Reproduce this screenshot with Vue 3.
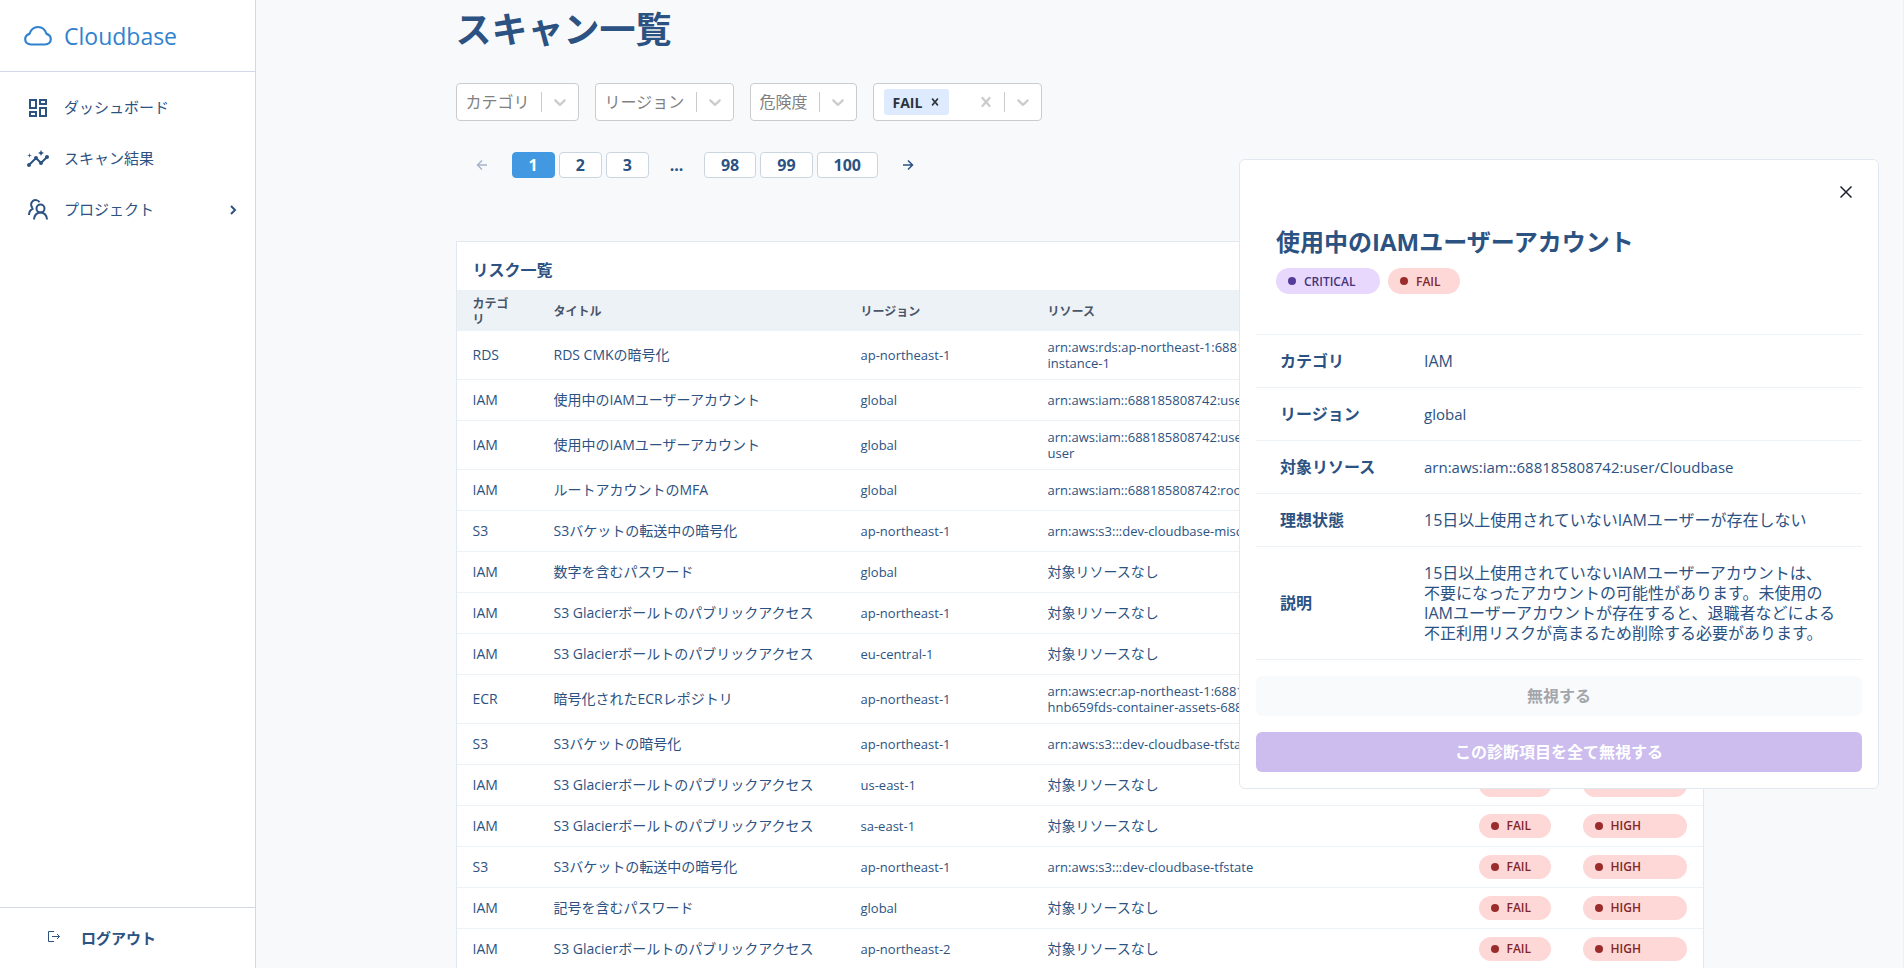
<script setup>
const filters = ['カテゴリ', 'リージョン', '危険度']

const rows = [
  ['RDS', 'RDS CMKの暗号化', 'ap-northeast-1', 'arn:aws:rds:ap-northeast-1:688185808742:db:\ninstance-1'],
  ['IAM', '使用中のIAMユーザーアカウント', 'global', 'arn:aws:iam::688185808742:user/Cloudbase'],
  ['IAM', '使用中のIAMユーザーアカウント', 'global', 'arn:aws:iam::688185808742:user/cloudbase-\nuser'],
  ['IAM', 'ルートアカウントのMFA', 'global', 'arn:aws:iam::688185808742:root'],
  ['S3', 'S3バケットの転送中の暗号化', 'ap-northeast-1', 'arn:aws:s3:::dev-cloudbase-misc'],
  ['IAM', '数字を含むパスワード', 'global', '対象リソースなし'],
  ['IAM', 'S3 Glacierボールトのパブリックアクセス', 'ap-northeast-1', '対象リソースなし'],
  ['IAM', 'S3 Glacierボールトのパブリックアクセス', 'eu-central-1', '対象リソースなし'],
  ['ECR', '暗号化されたECRレポジトリ', 'ap-northeast-1', 'arn:aws:ecr:ap-northeast-1:688185808742:cdk-\nhnb659fds-container-assets-688185808742'],
  ['S3', 'S3バケットの暗号化', 'ap-northeast-1', 'arn:aws:s3:::dev-cloudbase-tfstate'],
  ['IAM', 'S3 Glacierボールトのパブリックアクセス', 'us-east-1', '対象リソースなし'],
  ['IAM', 'S3 Glacierボールトのパブリックアクセス', 'sa-east-1', '対象リソースなし'],
  ['S3', 'S3バケットの転送中の暗号化', 'ap-northeast-1', 'arn:aws:s3:::dev-cloudbase-tfstate'],
  ['IAM', '記号を含むパスワード', 'global', '対象リソースなし'],
  ['IAM', 'S3 Glacierボールトのパブリックアクセス', 'ap-northeast-2', '対象リソースなし'],
]

const details = [
  ['カテゴリ', 'IAM'],
  ['リージョン', 'global'],
  ['対象リソース', 'arn:aws:iam::688185808742:user/Cloudbase'],
  ['理想状態', '15日以上使用されていないIAMユーザーが存在しない'],
  ['説明', '15日以上使用されていないIAMユーザーアカウントは、\n不要になったアカウントの可能性があります。未使用の\nIAMユーザーアカウントが存在すると、退職者などによる\n不正利用リスクが高まるため削除する必要があります。'],
]

// Long identifiers are set one step smaller than the Japanese text around them.
const isIdentifier = (text) => /^[\x00-\x7f]{4,}$/.test(text)
</script>

<template>
  <div class="app">
    <aside class="sidebar">
      <a class="brand" href="#">
        <svg class="brand-icon" viewBox="0 0 28 28" fill="none" stroke="currentColor" stroke-width="2.200" stroke-linejoin="round">
          <path d="M7 22.500 C3.500 22.500 1.200 20.300 1.200 17.300 C1.200 14.600 2.800 12.700 5.400 11.900 C6.800 7.800 9.800 5 14 5 C18.200 5 21.200 7.800 22.600 11.900 C25.200 12.700 26.800 14.600 26.800 17.300 C26.800 20.300 24.500 22.500 21 22.500 Z" />
        </svg>
        <span>Cloudbase</span>
      </a>
      <nav class="menu">
        <a class="item" href="#">
          <svg class="menu-icon" viewBox="0 0 24 24" fill="currentColor">
            <path d="M19 5v2h-4V5h4M9 5v6H5V5h4m10 8v6h-4v-6h4M9 17v2H5v-2h4M21 3h-8v6h8V3zM11 3H3v10h8V3zm10 8h-8v10h8V11zm-10 4H3v6h8v-6z" />
          </svg>
          <span>ダッシュボード</span>
        </a>
        <a class="item" href="#">
          <svg class="menu-icon" viewBox="0 0 24 24" fill="currentColor">
            <path d="M21 8c-1.450 0-2.260 1.440-1.930 2.510l-3.550 3.560c-.3-.09-.74-.09-1.040 0l-2.550-2.550C12.270 10.450 11.460 9 10 9c-1.450 0-2.270 1.440-1.930 2.520l-4.560 4.550C2.440 15.740 1 16.550 1 18c0 1.100.9 2 2 2 1.450 0 2.260-1.440 1.930-2.510l4.550-4.560c.3.090.74.090 1.040 0l2.550 2.550C12.730 16.550 13.540 18 15 18c1.450 0 2.270-1.440 1.930-2.520l3.560-3.550C21.560 12.260 23 11.450 23 10c0-1.100-.9-2-2-2z" />
            <path d="M15 9l.94-2.070L18 6l-2.060-.93L15 3l-.92 2.070L12 6l2.080.93zM3.500 11L4 9l2-.5L4 8l-.5-2L3 8l-2 .5L3 9z" />
          </svg>
          <span>スキャン結果</span>
        </a>
        <a class="item" href="#">
          <svg class="menu-icon" viewBox="0 0 24 24" fill="none" stroke="currentColor" stroke-width="2">
            <circle cx="14.500" cy="10.500" r="4" />
            <path d="M8 21.500c0-4 2.700-7 6.500-7s6.500 3 6.500 7" />
            <path d="M13.500 4.300A4.500 4.500 0 1 0 6.500 9.800M7.500 10.500c-2.900 1-4.500 3.300-4.500 6.500" />
          </svg>
          <span>プロジェクト</span>
          <svg class="chevron-right" viewBox="0 0 12 12" fill="none" stroke="currentColor" stroke-width="2"><path d="M4 2l4 4-4 4" /></svg>
        </a>
      </nav>
      <div class="logout-bar">
        <button class="logout" type="button">
          <svg viewBox="0 0 12 12" fill="none" stroke="currentColor" stroke-width="1"><path d="M6 .5H.5v10H6M4 5.500h7.500M9 3l2.500 2.500L9 8" /></svg>
          <span>ログアウト</span>
        </button>
      </div>
    </aside>

    <main class="main">
      <div class="container">
        <h1>スキャン一覧</h1>

        <div class="filters">
          <div v-for="name in filters" :key="name" class="filter">
            <select :aria-label="name"><option>{{ name }}</option></select>
            <span class="separator"></span>
            <svg class="indicator" viewBox="0 0 20 20" fill="currentColor"><path d="M4.516 7.548c.436-.446 1.043-.481 1.576 0L10 11.295l3.908-3.747c.533-.481 1.141-.446 1.574 0 .436.445.408 1.197 0 1.615-.406.418-4.695 4.502-4.695 4.502a1.095 1.095 0 0 1-1.576 0S4.924 9.581 4.516 9.163s-.436-1.170 0-1.615z" /></svg>
          </div>
          <div class="filter multi">
            <span class="tag">
              FAIL
              <button type="button" aria-label="FAILを外す"><svg viewBox="0 0 20 20" fill="currentColor"><path d="M14.348 14.849c-.469.469-1.229.469-1.697 0L10 11.819l-2.651 3.029c-.469.469-1.229.469-1.697 0-.469-.469-.469-1.229 0-1.697l2.758-3.150-2.759-3.152c-.469-.469-.469-1.228 0-1.697s1.228-.469 1.697 0L10 8.183l2.651-3.031c.469-.469 1.228-.469 1.697 0s.469 1.229 0 1.697l-2.758 3.152 2.758 3.150c.469.469.469 1.229 0 1.698z" /></svg></button>
            </span>
            <button class="indicator-button" type="button" aria-label="クリア"><svg viewBox="0 0 20 20" fill="currentColor"><path d="M14.348 14.849c-.469.469-1.229.469-1.697 0L10 11.819l-2.651 3.029c-.469.469-1.229.469-1.697 0-.469-.469-.469-1.229 0-1.697l2.758-3.150-2.759-3.152c-.469-.469-.469-1.228 0-1.697s1.228-.469 1.697 0L10 8.183l2.651-3.031c.469-.469 1.228-.469 1.697 0s.469 1.229 0 1.697l-2.758 3.152 2.758 3.150c.469.469.469 1.229 0 1.698z" /></svg></button>
            <span class="separator"></span>
            <button class="indicator-button" type="button" aria-label="ステータスを開く"><svg viewBox="0 0 20 20" fill="currentColor"><path d="M4.516 7.548c.436-.446 1.043-.481 1.576 0L10 11.295l3.908-3.747c.533-.481 1.141-.446 1.574 0 .436.445.408 1.197 0 1.615-.406.418-4.695 4.502-4.695 4.502a1.095 1.095 0 0 1-1.576 0S4.924 9.581 4.516 9.163s-.436-1.170 0-1.615z" /></svg></button>
          </div>
        </div>

        <nav class="pagination" aria-label="ページ">
          <button class="arrow" type="button" disabled aria-label="前へ"><svg viewBox="0 0 12 12" fill="none" stroke="currentColor" stroke-width="1.500"><path d="M11 6H1.500M6 1.500L1.500 6 6 10.500" /></svg></button>
          <button class="page current" type="button">1</button>
          <button class="page" type="button">2</button>
          <button class="page" type="button">3</button>
          <span class="ellipsis">...</span>
          <button class="page" type="button">98</button>
          <button class="page" type="button">99</button>
          <button class="page" type="button">100</button>
          <button class="arrow" type="button" aria-label="次へ"><svg viewBox="0 0 12 12" fill="none" stroke="currentColor" stroke-width="1.500"><path d="M1 6h9.500M6 1.500L10.500 6 6 10.500" /></svg></button>
        </nav>

        <section class="card">
          <h2>リスク一覧</h2>
          <table class="risks">
            <colgroup>
              <col class="col-category"><col class="col-title"><col class="col-region"><col><col class="col-status"><col class="col-severity">
            </colgroup>
            <thead>
              <tr><th>カテゴリ</th><th>タイトル</th><th>リージョン</th><th>リソース</th><th>ステータス</th><th>危険度</th></tr>
            </thead>
            <tbody>
              <tr v-for="(row, i) in rows" :key="i">
                <td v-for="(cell, j) in row" :key="j" :class="{ identifier: isIdentifier(cell), resource: j === 3 }">{{ cell }}</td>
                <td><span class="badge">FAIL</span></td>
                <td><span class="badge wide">HIGH</span></td>
              </tr>
            </tbody>
          </table>
        </section>
      </div>
    </main>

    <section class="panel" role="dialog" aria-labelledby="panel-title">
      <button class="close" type="button" aria-label="閉じる"><svg viewBox="0 0 12 12" fill="none" stroke="currentColor" stroke-width="1.500"><path d="M.5.500l11 11M11.500.500L.5 11.500" /></svg></button>
      <header>
        <h2 id="panel-title">使用中のIAMユーザーアカウント</h2>
        <div class="badges">
          <span class="badge wide critical">CRITICAL</span>
          <span class="badge">FAIL</span>
        </div>
      </header>
      <table class="details">
        <tbody>
          <tr v-for="[label, value] in details" :key="label">
            <th scope="row">{{ label }}</th>
            <td :class="{ identifier: isIdentifier(value) }">{{ value }}</td>
          </tr>
        </tbody>
      </table>
      <div class="actions">
        <button class="ignore" type="button" disabled>無視する</button>
        <button class="ignore-all" type="button" disabled>この診断項目を全て無視する</button>
      </div>
    </section>
  </div>
</template>

<style>
body {
  overflow: hidden;
  background: #f8f9fb;
}
</style>

<style scoped>
.app {
  display: flex;
  height: 100vh;
  overflow: hidden;
  color: #2c5282;
  font-family: "Open Sans", "Noto Sans CJK JP", sans-serif;
  font-size: 16px;
}
.app *,
.app *::before {
  box-sizing: border-box;
}
a {
  color: inherit;
  text-decoration: none;
}
button {
  padding: 0;
  border: 0;
  background: none;
  color: inherit;
  font: inherit;
}
svg {
  display: block;
  flex: none;
}
h1,
h2 {
  margin: 0;
}

.sidebar {
  display: flex;
  flex: none;
  flex-direction: column;
  width: 256px;
  border-right: 1px solid #d3d6e6;
  background: #fff;
}
.brand {
  display: flex;
  align-items: center;
  gap: 12px;
  height: 72px;
  padding: 0 24px;
  border-bottom: 1px solid #d3d6e6;
  color: #3182ce;
  font-size: 23px;
}
.brand-icon {
  width: 28px;
  height: 28px;
}
.menu {
  display: flex;
  flex: 1;
  flex-direction: column;
  padding-top: 10px;
}
.item {
  display: flex;
  align-items: center;
  gap: 14px;
  height: 51px;
  padding: 0 16px 0 26px;
  font-size: 15px;
}
.item span {
  padding-bottom: 2px;
}
.menu-icon {
  width: 24px;
  height: 24px;
}
.chevron-right {
  width: 12px;
  height: 12px;
  margin-left: auto;
}
.logout-bar {
  height: 61px;
  padding: 17px 48px;
  border-top: 1px solid #d3d6e6;
}
.logout {
  display: flex;
  align-items: center;
  gap: 21px;
  height: 24px;
  font-size: 15px;
  font-weight: 600;
}
.logout svg {
  width: 12px;
  height: 12px;
}

.main {
  flex: 1;
  min-width: 0;
  border-right: 1px solid #f0f1f3;
}
.container {
  max-width: 1248px;
  margin: 0 auto;
}
h1 {
  padding-top: 8px;
  font-size: 36px;
  line-height: 44px;
}

.filters {
  display: flex;
  gap: 16px;
  margin-top: 31px;
}
.filter {
  display: flex;
  align-items: center;
  height: 38px;
  border: 1px solid #ccc;
  border-radius: 4px;
  background: #fff;
  color: #ccc;
}
.filter select {
  margin: 0 10px 0 9px;
  padding: 0;
  border: 0;
  background: none;
  appearance: none;
  color: #808080;
  font: inherit;
}
.separator {
  align-self: stretch;
  width: 1px;
  margin: 8px 0;
  background: #ccc;
}
.indicator {
  width: 20px;
  height: 20px;
  margin: 0 8px;
}
.multi {
  width: 169px;
  padding-left: 10px;
}
.tag {
  display: flex;
  align-items: center;
  gap: 6px;
  height: 26px;
  margin-right: auto;
  padding: 0 7px 0 9px;
  border-radius: 3px;
  background: #deebff;
  color: #2d3339;
  font-size: 14px;
  font-weight: 700;
}
.tag svg {
  width: 14px;
  height: 14px;
}
.indicator-button svg {
  width: 20px;
  height: 20px;
  margin: 0 8px;
}

.pagination {
  display: flex;
  align-items: center;
  gap: 4px;
  margin-top: 31px;
}
.page {
  height: 26px;
  padding: 0 16px;
  border: 1px solid #cbd5e0;
  border-radius: 4px;
  background: #fff;
  font-weight: 700;
  line-height: 24px;
}
.current {
  border-color: #4299e1;
  background: #4299e1;
  color: #fff;
}
.ellipsis {
  width: 47px;
  font-weight: 700;
  line-height: 24px;
  text-align: center;
}
.arrow {
  display: flex;
  justify-content: center;
  width: 52px;
}
.arrow svg {
  width: 12px;
  height: 12px;
}
.arrow:disabled {
  opacity: 0.4;
}

.card {
  margin-top: 63px;
  border: 1px solid #e2e8f0;
  background: #fff;
}
.card h2 {
  padding: 16px 16px 8px;
  font-size: 16px;
  line-height: 24px;
}
table {
  width: 100%;
  border-collapse: separate;
  border-spacing: 0;
  table-layout: fixed;
}
.col-category {
  width: 81px;
}
.col-title {
  width: 307px;
}
.col-region {
  width: 187px;
}
.col-status {
  width: 104px;
}
.col-severity {
  width: 136px;
}
.risks th {
  height: 41px;
  padding: 6px 16px 3px;
  background: #edf2f7;
  color: #4a5568;
  font-size: 12px;
  font-weight: 700;
  line-height: 16px;
  text-align: left;
}
.risks th:first-child {
  padding-right: 24px;
}
.risks td {
  padding: 8px 16px;
  border-bottom: 1px solid #edf2f7;
  font-size: 14px;
  line-height: 16px;
}
.risks .identifier {
  font-size: 13px;
}
.resource {
  white-space: pre-line;
}
.badge {
  display: flex;
  align-items: center;
  gap: 8px;
  width: 72px;
  height: 24px;
  padding: 0 12px;
  border-radius: 12px;
  background: #fed7d7;
  color: #822727;
  font-size: 12px;
  font-weight: 600;
}
.badge::before {
  width: 8px;
  height: 8px;
  border-radius: 50%;
  background: #9b2c2c;
  content: "";
}
.wide {
  width: 104px;
}
.critical {
  background: #e9d8fd;
  color: #44337a;
}
.critical::before {
  background: #553c9a;
}

.panel {
  position: fixed;
  top: 159px;
  right: 25px;
  width: 640px;
  padding: 16px;
  border: 1px solid #e2e8f0;
  border-radius: 6px;
  background: #fff;
}
.close {
  display: flex;
  align-items: center;
  justify-content: center;
  width: 32px;
  height: 32px;
  margin-left: auto;
  color: #1a202c;
}
.close svg {
  width: 12px;
  height: 12px;
}
.panel header {
  padding: 18px 20px 40px;
}
.panel h2 {
  font-size: 24px;
  line-height: 32px;
}
.badges {
  display: flex;
  gap: 8px;
  margin-top: 10px;
}
.badges .badge {
  height: 26px;
  border-radius: 13px;
}
.details {
  border-top: 1px solid #edf2f7;
}
.details th,
.details td {
  padding: 16px 24px;
  border-bottom: 1px solid #edf2f7;
  line-height: 20px;
  text-align: left;
}
.details th {
  width: 144px;
  padding-right: 0;
}
.details td {
  white-space: pre-line;
}
.details .identifier {
  font-size: 15px;
}
.actions {
  display: flex;
  flex-direction: column;
  gap: 16px;
  margin-top: 16px;
}
.actions button {
  height: 40px;
  padding-bottom: 2px;
  border-radius: 6px;
  font-weight: 700;
}
.ignore {
  background: #f8fafc;
  color: #a3a6ab;
}
.ignore-all {
  background: #ccbdee;
  color: #fff;
}
</style>
